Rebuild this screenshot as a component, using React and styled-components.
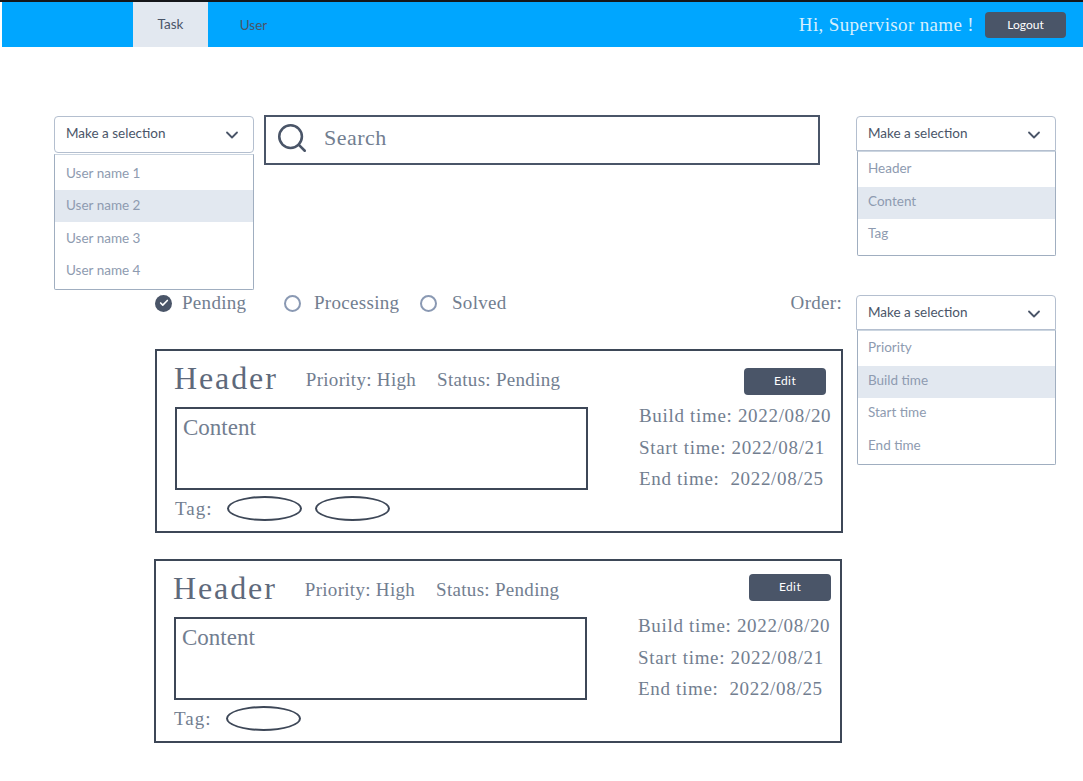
import styled, { createGlobalStyle } from "styled-components";
import { Check, ChevronDown, Search } from "lucide-react";

const GlobalStyle = createGlobalStyle`
    * {
        box-sizing: border-box;
    }

    body {
        margin: 0;
        background-color: #ffffff;
        font-family: "Lato", sans-serif;
    }
`;

const userNames = ['User name 1', 'User name 2', 'User name 3', 'User name 4'];
const searchFields = ['Header', 'Content', 'Tag'];
const orderFields = ['Priority', 'Build time', 'Start time', 'End time'];

const tasks = [
    { tags: 2, shift: 1, editRight: 0, editTop: 3 },
    { tags: 1, shift: 0, editRight: -6, editTop: -1 }
];

function Dropdown({ items, active, tall, menuHeight }) {
    return (
        <Select>
            <SelectBox $tall={tall}>
                Make a selection
                <Chevron size={20} strokeWidth={2.2} color="#4a5568" />
            </SelectBox>
            <Menu $tall={tall} $height={menuHeight}>
                {items.map((item, index) => (
                    <MenuItem key={item} $tall={tall} $active={index === active}>{item}</MenuItem>
                ))}
            </Menu>
        </Select>
    );
}

function Radio({ label, checked, width, gap }) {
    return (
        <RadioLabel $width={width} $gap={gap}>
            <RadioMark $checked={checked}>
                {checked ? <Check size={10} strokeWidth={4} color="#ffffff" /> : null}
            </RadioMark>
            {label}
        </RadioLabel>
    );
}

function TaskCard({ tags, shift, editRight, editTop }) {
    return (
        <Card $shift={shift}>
            <CardTop>
                <CardTitle>Header</CardTitle>
                <CardMeta>Priority: High</CardMeta>
                <CardMeta>Status: Pending</CardMeta>
                <EditButton $right={editRight} $top={editTop}>Edit</EditButton>
            </CardTop>
            <CardBody>
                <div>
                    <ContentBox>Content</ContentBox>
                    <TagRow>
                        Tag:
                        {Array.from({ length: tags }, (_, index) => <TagOval key={index} />)}
                    </TagRow>
                </div>
                <Times>
                    <p>Build time: 2022/08/20</p>
                    <p>Start time: 2022/08/21</p>
                    <p>End time:&nbsp; 2022/08/25</p>
                </Times>
            </CardBody>
        </Card>
    );
}

export default function App() {
    return (
        <Page>
            <GlobalStyle />
            <NavBar>
                <NavTab $active>Task</NavTab>
                <NavTab>User</NavTab>
                <Greeting>Hi, Supervisor name !</Greeting>
                <LogoutButton>Logout</LogoutButton>
            </NavBar>
            <Main>
                <LeftColumn>
                    <TopRow>
                        <Dropdown items={userNames} active={1} tall menuHeight={136} />
                        <SearchBox>
                            <SearchIcon size={34} strokeWidth={1.8} color="#4a5568" />
                            Search
                        </SearchBox>
                    </TopRow>
                    <FilterRow>
                        <Radio label="Pending" checked width={129} gap={10} />
                        <Radio label="Processing" width={136} gap={13} />
                        <Radio label="Solved" gap={15} />
                        <OrderLabel>Order:</OrderLabel>
                    </FilterRow>
                    {tasks.map((task, index) => <TaskCard key={index} {...task} />)}
                </LeftColumn>
                <RightColumn>
                    <Dropdown items={searchFields} active={1} menuHeight={105} />
                    <Dropdown items={orderFields} active={1} menuHeight={135} />
                </RightColumn>
            </Main>
        </Page>
    );
}

const Page = styled.div`
    width: 1083px;
    min-height: 781px;
    border-top: 2px solid #14161a;
`;

const NavBar = styled.nav`
    height: 45px;
    margin-left: 2px;
    padding: 0 17px 0 131px;
    display: flex;
    align-items: center;
    background-color: #00a6ff;
`;

const NavTab = styled.div`
    width: 75px;
    height: 100%;
    margin-right: 8px;
    padding-bottom: ${(props) => props.$active ? '1px' : '0'};
    display: flex;
    align-items: center;
    justify-content: center;
    font-size: 13.5px;
    color: #4a5568;
    background-color: ${(props) => props.$active ? '#e2e8f0' : 'transparent'};
`;

const Greeting = styled.span`
    margin-left: auto;
    margin-right: 11px;
    font-family: "Liberation Serif", serif;
    font-size: 19px;
    letter-spacing: 0.35px;
    color: #d5effd;
`;

const LogoutButton = styled.button`
    width: 81px;
    height: 26px;
    border: none;
    border-radius: 4px;
    font-family: "Lato", sans-serif;
    font-size: 12px;
    color: #ffffff;
    background-color: #4a5568;
`;

const Main = styled.main`
    padding: 69px 27px 0 54px;
    display: flex;
`;

const LeftColumn = styled.div`
    width: 802px;
`;

const RightColumn = styled.div`
    width: 200px;
    display: flex;
    flex-direction: column;
    gap: 39px;
`;

const TopRow = styled.div`
    height: 174px;
    display: flex;
    align-items: flex-start;
    gap: 10px;
`;

const Select = styled.div`
    width: 200px;
`;

const SelectBox = styled.div`
    height: ${(props) => props.$tall ? '37px' : '35px'};
    padding: 0 11px ${(props) => props.$tall ? '3px' : '2px'};
    display: flex;
    align-items: center;
    justify-content: space-between;
    border: 1px solid #b4bfcf;
    border-radius: ${(props) => props.$tall ? '4px' : '4px 4px 0 0'};
    font-size: 13.5px;
    color: #4a5568;
`;

const Chevron = styled(ChevronDown)`
    margin-top: 4px;
`;

const Menu = styled.ul`
    height: ${(props) => props.$height}px;
    margin: ${(props) => props.$tall ? '1px 0 0' : '0 0 0 1px'};
    padding: 2px 0 0;
    list-style: none;
    border: 1px solid #a0aec0;
    border-top-color: #cbd5e0;
    border-radius: 0 0 2px 2px;
`;

const MenuItem = styled.li`
    height: 32.5px;
    padding: 0 0 ${(props) => props.$tall ? '1.5px 11px' : '4px 10px'};
    display: flex;
    align-items: center;
    font-size: 13.5px;
    color: #8e9bb0;
    background-color: ${(props) => props.$active ? '#e2e8f0' : 'transparent'};
`;

const SearchBox = styled.div`
    width: 556px;
    height: 50px;
    margin-top: -1px;
    padding: 0 0 5px 9px;
    display: flex;
    align-items: center;
    gap: 15px;
    border: 2px solid #4a5568;
    font-family: "Liberation Serif", serif;
    font-size: 22px;
    letter-spacing: 0.5px;
    color: #727e90;
`;

const SearchIcon = styled(Search)`
    margin-top: 1px;
`;

const FilterRow = styled.div`
    height: 59px;
    margin-left: 101px;
    padding: 2px 14px 0 0;
    display: flex;
    align-items: flex-start;
    font-family: "Liberation Serif", serif;
    font-size: 19px;
    letter-spacing: 0.3px;
    color: #727e90;
`;

const RadioLabel = styled.label`
    width: ${(props) => props.$width ? `${props.$width}px` : 'auto'};
    display: flex;
    align-items: center;
    gap: ${(props) => props.$gap}px;
`;

const RadioMark = styled.span`
    width: 17px;
    height: 17px;
    display: flex;
    align-items: center;
    justify-content: center;
    border-radius: 50%;
    border: ${(props) => props.$checked ? 'none' : '2px solid #8a99b3'};
    background-color: ${(props) => props.$checked ? '#4a5568' : 'transparent'};
`;

const OrderLabel = styled.span`
    margin-left: auto;
`;

const Card = styled.article`
    position: relative;
    left: ${(props) => props.$shift}px;
    width: 688px;
    height: 184px;
    margin: 0 0 26px 100px;
    padding: 9px 15px 0 18px;
    border: 2px solid #3d4757;
    font-family: "Liberation Serif", serif;
    color: #727e90;
`;

const CardTop = styled.div`
    height: 47px;
    padding-bottom: 11px;
    display: flex;
    align-items: center;
`;

const CardTitle = styled.h2`
    margin: 0 28px 0 -1px;
    font-size: 32px;
    font-weight: 400;
    letter-spacing: 1.9px;
    color: #5e697b;
`;

const CardMeta = styled.span`
    position: relative;
    top: 2px;
    margin-right: 21px;
    font-size: 19px;
    letter-spacing: 0.3px;
`;

const EditButton = styled.button`
    position: relative;
    left: ${(props) => -props.$right}px;
    top: ${(props) => props.$top}px;
    width: 82px;
    height: 27px;
    margin-left: auto;
    flex-shrink: 0;
    padding-bottom: 2px;
    border: none;
    border-radius: 4px;
    font-family: "Lato", sans-serif;
    font-size: 12px;
    letter-spacing: 0.4px;
    color: #ffffff;
    background-color: #4a5568;
`;

const CardBody = styled.div`
    display: flex;
    justify-content: space-between;
`;

const ContentBox = styled.div`
    width: 413px;
    height: 83px;
    padding: 6px;
    border: 2px solid #3d4757;
    font-size: 23px;
`;

const TagRow = styled.div`
    height: 25px;
    margin-top: 6px;
    display: flex;
    align-items: center;
    font-size: 19px;
    letter-spacing: 1px;

    & > span:first-of-type {
        margin-left: 14px;
    }
`;

const TagOval = styled.span`
    width: 75px;
    height: 25px;
    margin-right: 13px;
    border: 2px solid #3d4757;
    border-radius: 50%;
`;

const Times = styled.div`
    width: 187px;
    margin-top: -2px;
    font-size: 19px;
    letter-spacing: 0.68px;

    p {
        height: 31.5px;
        margin: 0;
        white-space: nowrap;
    }
`;
